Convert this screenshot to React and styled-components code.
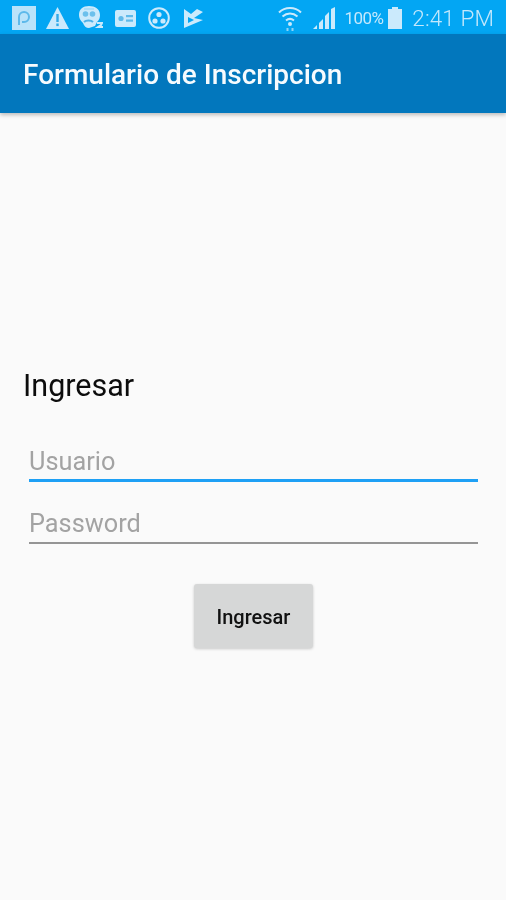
import styled, { createGlobalStyle } from "styled-components";

const GlobalStyle = createGlobalStyle`
  html, body {
    margin: 0;
    padding: 0;
    height: 100%;
    background-color: #fafafa;
    font-family: "Roboto", "Liberation Sans", sans-serif;
  }
  #root {
    height: 100%;
  }
`;

// the reference is an upscaled capture, so everything is a little soft
const Screen = styled.div`
  width: 506px;
  height: 900px;
  display: flex;
  flex-direction: column;
  overflow: hidden;
  background-color: #fafafa;
  filter: blur(0.5px);
`;
const StatusBar = styled.div`
  height: 34px;
  flex-shrink: 0;
  box-sizing: border-box;
  padding: 2px 12px 0;
  display: flex;
  align-items: center;
  justify-content: space-between;
  background-color: #03a6f3;
  color: #c4e8fc;
`;
const IconGroup = styled.div`
  display: flex;
  align-items: center;
  column-gap: ${(props) => props.$gap}px;
`;
const StatusIcon = styled.svg`
  display: block;
  flex-shrink: 0;
  fill: #cbeafc;
  margin-left: ${(props) => props.$before || 0}px;
  margin-right: ${(props) => props.$after || 0}px;
`;
const BatteryText = styled.span`
  font-size: 17px;
  letter-spacing: -0.6px;
`;
const Clock = styled.span`
  font-size: 22.5px;
  font-weight: 300;
  letter-spacing: 0.1px;
  margin-left: 5px;
`;
const AppBar = styled.header`
  height: 79px;
  flex-shrink: 0;
  box-sizing: border-box;
  padding: 2px 0 0 23px;
  display: flex;
  align-items: center;
  background-color: #0277bd;
  box-shadow: 0 2px 4px rgba(0, 0, 0, 0.25);
`;
const AppTitle = styled.h1`
  margin: 0;
  color: #f6fbfe;
  font-size: 28px;
  font-weight: 500;
`;
const Content = styled.main`
  flex: 1;
  box-sizing: border-box;
  padding: 255px 28px 0 23px;
  display: flex;
  flex-direction: column;
`;
const LoginTitle = styled.h2`
  margin: 0 0 37px;
  color: #0c0c0c;
  font-size: 30.5px;
  line-height: 36px;
  font-weight: 400;
`;
const LoginForm = styled.form`
  display: flex;
  flex-direction: column;
  row-gap: 21px;
  padding-left: 6px;
`;
const Field = styled.input`
  box-sizing: border-box;
  width: 100%;
  height: 41px;
  padding: 2px 0 0;
  outline: none;
  border: none;
  border-bottom: ${(props) =>
    props.$active ? "3px solid #1ea0f5" : "2px solid #959595"};
  background: transparent;
  font-family: inherit;
  font-size: 25.3px;
  color: #333;
  &::placeholder {
    color: #a3a3a3;
    opacity: 1;
  }
`;
const SubmitButton = styled.button`
  align-self: center;
  width: 119px;
  height: 64px;
  margin-top: 19px;
  padding: 2px 0 0;
  border: none;
  border-radius: 3px;
  background-color: #d6d7d7;
  box-shadow: 0 1px 3px rgba(0, 0, 0, 0.2);
  font-family: inherit;
  font-size: 20px;
  font-weight: 500;
  color: #111;
`;

function StatusIcons() {
  return (
    <IconGroup $gap={10}>
      <StatusIcon width="24" height="24" viewBox="0 0 24 24">
        <rect width="24" height="24" fill="#b9e3fa" />
        <path
          d="M7 19V11a5 5 0 1 1 5 5H10"
          fill="none"
          stroke="#5db9ea"
          strokeWidth="2"
        />
      </StatusIcon>
      <StatusIcon width="23" height="22" viewBox="0 0 23 22">
        <path d="M11.5 0 23 22H0z" />
        <rect x="10.3" y="7" width="2.4" height="8" fill="#2fa9e8" />
        <rect x="10.3" y="16.5" width="2.4" height="2.6" fill="#2fa9e8" />
      </StatusIcon>
      <StatusIcon width="24" height="24" viewBox="0 0 24 24">
        <path d="M10 0c6 0 11 3 11 9 0 3-1 5-3 7l-2 4-6 2c-3 0-5-2-6-5C1 14 0 12 0 9c0-6 4-9 10-9z" />
        <circle cx="6.500" cy="8" r="2.800" fill="#6cc0ec" />
        <circle cx="13.500" cy="8" r="2.800" fill="#6cc0ec" />
        <path d="M5 3h10" fill="none" stroke="#8fd3f6" strokeWidth="1" />
        <path
          d="M5 16c2-2 7-2 9 0"
          fill="none"
          stroke="#4fb2e8"
          strokeWidth="2"
        />
        <path
          d="M18 17h5l-1 2-3 2h5"
          fill="none"
          stroke="#cbeafc"
          strokeWidth="2"
        />
      </StatusIcon>
      <StatusIcon width="21" height="17" viewBox="0 0 21 17" $before={2}>
        <rect width="21" height="17" rx="2" />
        <circle cx="6" cy="8.500" r="2.600" fill="#5fbaea" />
        <rect x="11" y="5" width="7" height="2.200" fill="#5fbaea" />
        <rect x="11" y="9.500" width="7" height="2.200" fill="#5fbaea" />
      </StatusIcon>
      <StatusIcon width="22" height="22" viewBox="0 0 22 22" $before={2}>
        <circle
          cx="11"
          cy="11"
          r="9.800"
          fill="none"
          stroke="#cbeafc"
          strokeWidth="2"
        />
        <circle cx="11" cy="7.500" r="2.600" />
        <circle cx="7" cy="14" r="2.600" />
        <circle cx="15" cy="14" r="2.600" />
      </StatusIcon>
      <StatusIcon width="19" height="19" viewBox="0 0 19 19" $before={4}>
        <path
          d="M0 0 7 5 13 0l6 3-9 6 9 2L0 19zM4 8v6l6-3z"
          fillRule="evenodd"
        />
      </StatusIcon>
    </IconGroup>
  );
}

function SystemIcons() {
  return (
    <IconGroup $gap={5}>
      <StatusIcon width="24" height="25" viewBox="0 0 24 25" $after={6}>
        <g fill="none" stroke="#cbeafc" strokeWidth="2">
          <path d="M1 6.500c6-6 16-6 22 0" />
          <path d="M4.500 10.500c4.500-4 10.500-4 15 0" />
          <path d="M8 14.500c2.500-2 5.500-2 8 0" />
        </g>
        <circle cx="12" cy="18" r="2" />
        <path d="M8.500 25v-3h2v3zM13.500 25v-3h2v3z" fill="#8fd3f6" />
      </StatusIcon>
      <StatusIcon width="23" height="22" viewBox="0 0 23 22" $after={4}>
        <path d="M0 22l4-4v4zM6 22v-6l4-4v10zM12 22V9l4-4v17zM18 22V2l4-2v22z" />
      </StatusIcon>
      <BatteryText>100%</BatteryText>
      <StatusIcon width="14" height="22" viewBox="0 0 14 22">
        <path d="M4 0h6v2h4v20H0V2h4z" />
      </StatusIcon>
      <Clock>2:41 PM</Clock>
    </IconGroup>
  );
}

export default function App() {
  return (
    <Screen>
      <GlobalStyle />
      <StatusBar>
        <StatusIcons />
        <SystemIcons />
      </StatusBar>
      <AppBar>
        <AppTitle>Formulario de Inscripcion</AppTitle>
      </AppBar>
      <Content>
        <LoginTitle>Ingresar</LoginTitle>
        <LoginForm onSubmit={(e) => e.preventDefault()}>
          <Field placeholder="Usuario" $active />
          <Field placeholder="Password" type="password" />
          <SubmitButton type="submit">Ingresar</SubmitButton>
        </LoginForm>
      </Content>
    </Screen>
  );
}
